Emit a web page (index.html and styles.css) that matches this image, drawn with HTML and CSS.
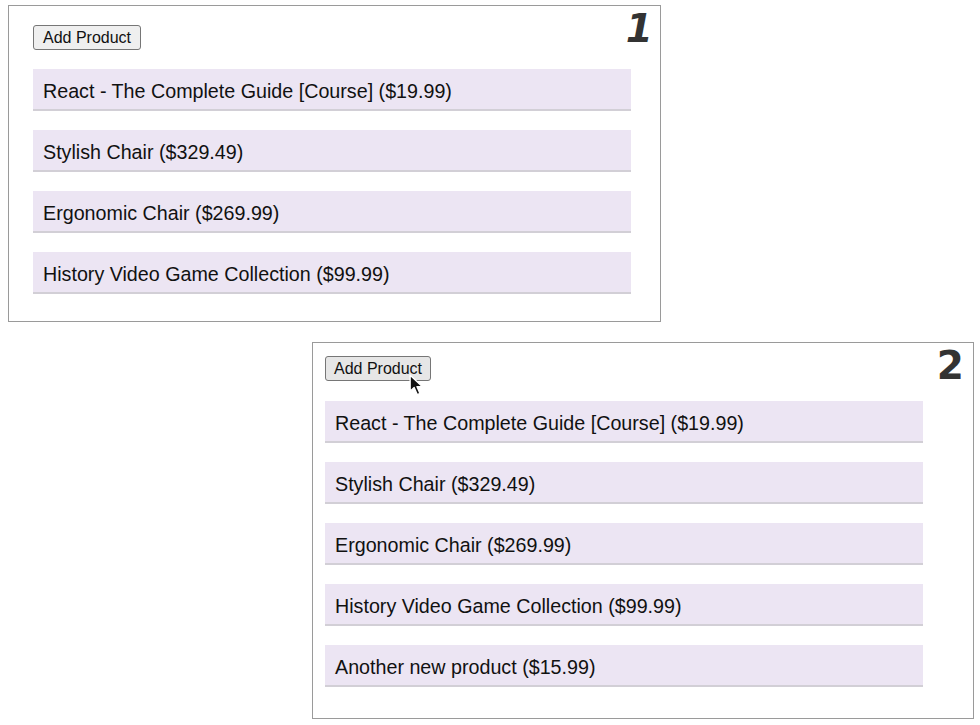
FILE: index.html
```html
<!DOCTYPE html>
<html>
<head>
<meta charset="utf-8">
<link rel="stylesheet" href="styles.css">
</head>
<body>
<div class="canvas">
  <section class="shot shot-one">
    <span class="step step-one">1</span>
    <button class="add-btn">Add Product</button>
    <ul class="products">
      <li class="product">React - The Complete Guide [Course] ($19.99)</li>
      <li class="product">Stylish Chair ($329.49)</li>
      <li class="product">Ergonomic Chair ($269.99)</li>
      <li class="product">History Video Game Collection ($99.99)</li>
    </ul>
  </section>
  <section class="shot shot-two">
    <span class="step step-two">2</span>
    <button class="add-btn">Add Product</button>
    <svg class="cursor" width="16" height="23" viewBox="0 0 14 20">
      <path d="M1 1 L1 15 L4.5 11.8 L7.2 18 L9.6 17 L7 11 L11.8 11 Z" fill="#111" stroke="#fff" stroke-width="1.2" stroke-linejoin="round"/>
    </svg>
    <ul class="products">
      <li class="product">React - The Complete Guide [Course] ($19.99)</li>
      <li class="product">Stylish Chair ($329.49)</li>
      <li class="product">Ergonomic Chair ($269.99)</li>
      <li class="product">History Video Game Collection ($99.99)</li>
      <li class="product">Another new product ($15.99)</li>
    </ul>
  </section>
</div>
</body>
</html>
```

FILE: styles.css
```css
html, body {
  margin: 0;
  padding: 0;
  background: #ffffff;
}

.canvas {
  width: 980px;
  height: 725px;
  display: flex;
  flex-direction: column;
  align-items: flex-start;
  font-family: "Liberation Sans", Arial, sans-serif;
  color: #111;
}

.shot {
  position: relative;
  box-sizing: border-box;
  border: 1px solid #9a9a9a;
  background: #fff;
  display: flex;
  flex-direction: column;
  align-items: flex-start;
}

.shot-one {
  margin: 5px 0 0 8px;
  width: 653px;
  height: 317px;
  padding: 19px 0 0 24px;
}

.shot-two {
  margin: 20px 0 0 312px;
  width: 662px;
  height: 377px;
  padding: 13px 0 0 12px;
}

.step {
  position: absolute;
  font-family: "DejaVu Sans", "Liberation Sans", sans-serif;
  font-weight: bold;
  font-size: 39px;
  line-height: 1;
  color: #333;
}

.step-one {
  top: 3px;
  right: 7px;
  font-style: italic;
}

.step-two {
  top: 3px;
  right: 9px;
}

.add-btn {
  font-family: "Liberation Sans", Arial, sans-serif;
  font-size: 16px;
  height: 25px;
  padding: 0 9px;
  background: #efefef;
  color: #111;
  border: 1px solid #767676;
  border-radius: 3px;
  line-height: 23px;
}

.shot-two .add-btn {
  background: #e6e6e6;
  padding: 0 8px;
}

.cursor {
  position: absolute;
  left: 96px;
  top: 31px;
}

.products {
  list-style: none;
  margin: 19px 0 0;
  padding: 0;
  display: flex;
  flex-direction: column;
  gap: 19px;
}

.shot-two .products {
  margin-top: 20px;
}

.product {
  box-sizing: border-box;
  width: 598px;
  height: 42px;
  padding: 0 10px;
  background: #ece5f3;
  border-bottom: 2px solid #d2cfd6;
  font-size: 19.7px;
  line-height: 44px;
  white-space: nowrap;
}
```
